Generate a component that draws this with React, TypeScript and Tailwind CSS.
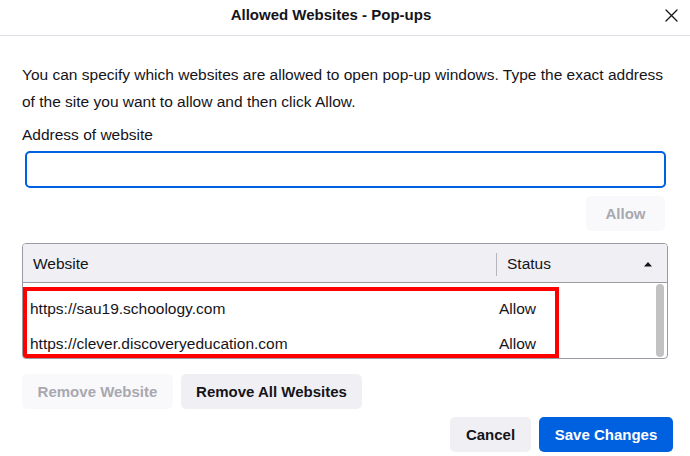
import React from 'react';

const font = { fontFamily: '"Liberation Sans", Arial, sans-serif' };

const sites = [
  { url: 'https://sau19.schoology.com', status: 'Allow' },
  { url: 'https://clever.discoveryeducation.com', status: 'Allow' },
];

const CloseIcon = () => (
  <svg width="13" height="13" viewBox="0 0 13 13" fill="none">
    <path d="M1 1L12 12M12 1L1 12" stroke="#15141a" strokeWidth="1.3" strokeLinecap="round" />
  </svg>
);

export default function App() {
  return (
    <div className="w-[690px] h-[456px] bg-white text-[#15141a] overflow-hidden" style={font}>
      {/* title bar */}
      <div className="relative h-[36px] border-b border-[#e0e0e6] flex items-center justify-center">
        <div className="text-[15px] font-bold pr-[28px] pb-[4px]">Allowed Websites - Pop-ups</div>
        <div className="absolute right-[12px] top-[9px]">
          <CloseIcon />
        </div>
      </div>

      <div className="pl-[22px] pr-[22px]">
        <p className="pt-[25px] text-[15.5px] leading-[27px]">
          You can specify which websites are allowed to open pop-up windows. Type the exact address
          <br />
          of the site you want to allow and then click Allow.
        </p>
        <div className="mt-[10px] text-[15.5px] leading-[20px]">Address of website</div>
        <div className="mt-[6px] ml-[3px] mr-[2px] h-[37px] rounded-[5px] border-2 border-[#0061e0]" />
        <div className="mt-[8px] flex justify-end pr-[3px]">
          <div className="w-[79px] h-[35px] pt-[2px] rounded-[5px] bg-[#f9f9fb] text-[#a8a8b0] text-[15px] font-bold flex items-center justify-center">
            Allow
          </div>
        </div>

        {/* table */}
        <div className="relative mt-[12px] h-[116px] border border-[#9a9aa2] rounded-[4px] overflow-hidden">
          <div className="h-[39px] pt-[2px] bg-[#f0f0f4] border-b border-[#9a9aa2] flex items-center text-[15.5px]">
            <div className="w-[473px] pl-[10px]">Website</div>
            <div className="w-px h-[23px] bg-[#b5b5bb]" />
            <div className="flex-1 pl-[10px]">Status</div>
            <svg width="10" height="6" viewBox="0 0 10 6" className="mr-[14px]">
              <path d="M1 5.5L5 1L9 5.5Z" fill="#15141a" />
            </svg>
          </div>
          <div className="relative pt-[8px] text-[15.5px]">
            {sites.map((s) => (
              <div key={s.url} className="h-[35px] flex items-center">
                <div className="w-[476px] pl-[7px]">{s.url}</div>
                <div>{s.status}</div>
              </div>
            ))}
            <div className="absolute right-[3px] top-[1px] w-[8px] h-[73px] rounded-full bg-[#c2c2c2]" />
          </div>
          {/* red annotation box */}
          <div className="absolute left-0 top-[43px] w-[536px] h-[71px] border-4 border-[#ff0000]" />
        </div>

        <div className="mt-[15px] flex gap-[8px]">
          <div className="w-[151px] h-[35px] pt-[2px] rounded-[5px] bg-[#f9f9fb] text-[#a8a8b0] text-[15px] font-bold flex items-center justify-center">
            Remove Website
          </div>
          <div className="w-[181px] h-[35px] pt-[2px] rounded-[5px] bg-[#f0f0f4] text-[15px] font-bold flex items-center justify-center">
            Remove All Websites
          </div>
        </div>
      </div>

      <div className="mt-[8px] pr-[17px] flex justify-end gap-[8px]">
        <div className="w-[81px] h-[35px] pt-[2px] rounded-[5px] bg-[#f0f0f4] text-[15px] font-bold flex items-center justify-center">
          Cancel
        </div>
        <div className="w-[134px] h-[35px] pt-[2px] rounded-[5px] bg-[#0061e0] text-white text-[15px] font-bold flex items-center justify-center">
          Save Changes
        </div>
      </div>
    </div>
  );
}
